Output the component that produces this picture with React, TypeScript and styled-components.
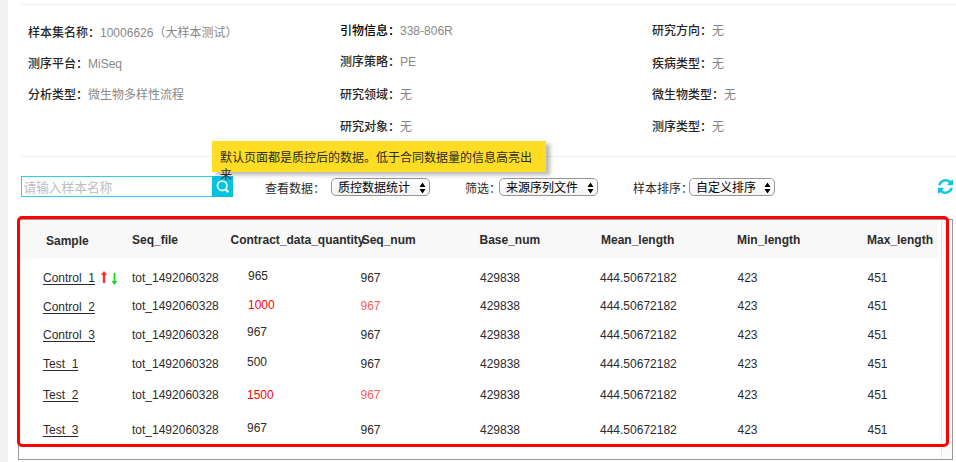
import React from "react";
import styled, { createGlobalStyle } from "styled-components";

const GlobalStyle = createGlobalStyle`
  * { box-sizing: border-box; }
  body {
    margin: 0;
    background: #fff;
    color: #2b2b2b;
    font: 12px/20px "Liberation Sans", "Noto Sans CJK SC", sans-serif;
  }
`;

const Page = styled.main`
  position: relative;
  display: flex;
  flex-direction: column;
  width: 956px;
  height: 462px;
  overflow: hidden;
  padding-left: 10px;
  border-left: 8px solid #f1f1f1;
`;

const InfoPanel = styled.section`
  display: grid;
  grid-template-columns: 312px 312px 1fr;
  height: 153px;
  margin: 4px 0 0 3px;
  padding: 1px 0 0 7px;
  border: solid #efefef;
  border-width: 1px 0;
`;

const InfoColumn = styled.dl<{ $top: number }>`
  margin: 0;
  padding-top: ${(p) => p.$top}px;
`;

const InfoItem = styled.div<{ $height: number }>`
  display: flex;
  height: ${(p) => p.$height}px;
  white-space: nowrap;
`;

const InfoLabel = styled.dt<{ $strong?: boolean }>`
  font-weight: 500;
  color: ${(p) => (p.$strong ? "#000" : "#262626")};
`;

const InfoValue = styled.dd`
  margin: 0;
  color: #888;
`;

const Toolbar = styled.section`
  display: flex;
  align-items: flex-start;
  height: 62px;
  padding: 19px 0 0 3px;
`;

const SearchBox = styled.form`
  display: flex;
  width: 212px;
  height: 21px;
  margin-right: 32px;
`;

const SearchInput = styled.input`
  width: 191px;
  height: 21px;
  padding: 3px 1.5px 0;
  border: 1px solid #2ccfe6;
  border-right: 0;
  outline: 0;
  background: #fff;
  font: 12.7px "Liberation Sans", "Noto Sans CJK SC", sans-serif;
  &::placeholder { color: #bdbdbd; opacity: 1; }
`;

const SearchButton = styled.button`
  display: flex;
  width: 21px;
  height: 21px;
  padding: 4px 0 0 4px;
  border: 0;
  background: #00c3e0;
`;

const FilterLabel = styled.span<{ $width: number }>`
  flex: none;
  width: ${(p) => p.$width}px;
  padding-top: 3px;
  white-space: nowrap;
`;

const Select = styled.button<{ $width: number; $gap: number }>`
  display: flex;
  flex: none;
  align-items: center;
  justify-content: space-between;
  width: ${(p) => p.$width}px;
  height: 18px;
  margin: 2px ${(p) => p.$gap}px 0 0;
  padding: 1px 3px 0 6px;
  border: 1px solid #969696;
  border-radius: 5px;
  background: linear-gradient(#fff, #f4f4f4);
  color: #000;
  font: 12px/16px "Liberation Sans", "Noto Sans CJK SC", sans-serif;
`;

const Refresh = styled.svg`
  flex: none;
  width: 15px;
  height: 15px;
  margin: 3px 3px 0 auto;
  fill: #10c6e2;
`;

const TableFrame = styled.section`
  display: grid;
  grid-template-columns: 1fr 11px;
  width: 935px;
  height: 241px;
  border: 1px solid #999;
`;

const ScrollTrack = styled.div`
  border-left: 1px solid #e6e6e6;
  background: #fafafa;
`;

const Table = styled.div`
  min-width: 0;
`;

const HeaderRow = styled.div`
  display: grid;
  grid-template-columns: 86px 98.5px 131.2px 117.8px 121.5px 136px 130px 1fr;
  height: 39px;
  margin: 0 3px 5px 0;
  padding: 10px 0 0 27px;
  background: #f8f8f8;
  font-weight: 700;
  white-space: nowrap;
`;

const HeaderCell = styled.span<{ $drop?: boolean }>`
  padding-top: ${(p) => (p.$drop ? 1 : 0)}px;
`;

const Row = styled.div<{ $height: number }>`
  display: grid;
  grid-template-columns: 89px 115px 113.5px 119.5px 120px 137.5px 130px 1fr;
  align-items: center;
  height: ${(p) => p.$height}px;
  padding-left: 24px;
  white-space: nowrap;
`;

const SampleCell = styled.span<{ $drop?: boolean }>`
  display: flex;
  align-items: center;
  padding-top: ${(p) => (p.$drop ? 2 : 0)}px;
`;

const SampleLink = styled.a`
  text-decoration: underline;
  text-underline-offset: 2px;
  text-decoration-skip-ink: none;
`;

const SortArrows = styled.svg`
  width: 18px;
  height: 16px;
  margin-left: 5px;
`;

const Quantity = styled.span<{ $indent: number; $raise: number; $low?: boolean }>`
  padding-left: ${(p) => p.$indent}px;
  padding-bottom: ${(p) => p.$raise * 2}px;
  color: ${(p) => (p.$low ? "#f00" : "inherit")};
`;

const Count = styled.span<{ $low?: boolean }>`
  color: ${(p) => (p.$low ? "#ff5c5c" : "inherit")};
`;

const Tooltip = styled.aside`
  position: absolute;
  left: 204px;
  top: 141px;
  width: 334px;
  height: 31px;
  padding: 9px 10px 0 8px;
  background: #ffdd24;
  box-shadow: 4px 3px 4px rgba(0, 0, 0, 0.28);
  line-height: 17px;
`;

const Highlight = styled.div`
  position: absolute;
  left: 9px;
  top: 216px;
  width: 932px;
  height: 231px;
  border: 3px solid #f00;
  border-radius: 5px;
  pointer-events: none;
`;

type Info = { label: string; value: string; height: number; strong?: boolean };

const infoColumns: { top: number; items: Info[] }[] = [
  {
    top: 17,
    items: [
      { label: "样本集名称：", value: "10006626（大样本测试）", height: 31 },
      { label: "测序平台：", value: "MiSeq", height: 31 },
      { label: "分析类型：", value: "微生物多样性流程", height: 31 },
    ],
  },
  {
    top: 15,
    items: [
      { label: "引物信息：", value: "338-806R", height: 31, strong: true },
      { label: "测序策略：", value: "PE", height: 33 },
      { label: "研究领域：", value: "无", height: 32 },
      { label: "研究对象：", value: "无", height: 32 },
    ],
  },
  {
    top: 15,
    items: [
      { label: "研究方向：", value: "无", height: 33 },
      { label: "疾病类型：", value: "无", height: 31 },
      { label: "微生物类型：", value: "无", height: 32 },
      { label: "测序类型：", value: "无", height: 32 },
    ],
  },
];

const headers = [
  "Sample", "Seq_file", "Contract_data_quantity", "Seq_num",
  "Base_num", "Mean_length", "Min_length", "Max_length",
];

const rows = [
  { sample: "Control_1", quantity: "965", indent: 1, raise: 2, height: 28 },
  { sample: "Control_2", quantity: "1000", indent: 1, raise: 1, height: 28, low: true, drop: true },
  { sample: "Control_3", quantity: "967", indent: 0, raise: 3, height: 30 },
  { sample: "Test_1", quantity: "500", indent: 0, raise: 2, height: 28 },
  { sample: "Test_2", quantity: "1500", indent: 0, raise: 0, height: 34, low: true },
  { sample: "Test_3", quantity: "967", indent: 0, raise: 2, height: 36 },
];

function DropDown({ text, width, gap }: { text: string; width: number; gap: number }) {
  return (
    <Select type="button" $width={width} $gap={gap}>
      {text}
      <svg width="7" height="12" viewBox="0 0 7 12">
        <path d="M3.5 0.5 6.5 5h-6zM3.5 11.5 6.5 7h-6z" fill="#000" />
      </svg>
    </Select>
  );
}

export default function App() {
  return (
    <Page>
      <GlobalStyle />
      <InfoPanel>
        {infoColumns.map((column, i) => (
          <InfoColumn key={i} $top={column.top}>
            {column.items.map((item) => (
              <InfoItem key={item.label} $height={item.height}>
                <InfoLabel $strong={item.strong}>{item.label}</InfoLabel>
                <InfoValue>{item.value}</InfoValue>
              </InfoItem>
            ))}
          </InfoColumn>
        ))}
      </InfoPanel>

      <Toolbar>
        <SearchBox>
          <SearchInput placeholder="请输入样本名称" />
          <SearchButton type="button" aria-label="搜索">
            <svg width="14" height="14" viewBox="0 0 14 14" fill="none" stroke="#e6fbff" strokeWidth="1.8">
              <circle cx="6.2" cy="5.8" r="4.7" />
              <path d="m9.6 9.3 2.8 2.9" strokeWidth="2.4" />
            </svg>
          </SearchButton>
        </SearchBox>
        <FilterLabel $width={66}>查看数据：</FilterLabel>
        <DropDown text="质控数据统计" width={99} gap={35} />
        <FilterLabel $width={34}>筛选：</FilterLabel>
        <DropDown text="来源序列文件" width={99} gap={35} />
        <FilterLabel $width={56}>样本排序：</FilterLabel>
        <DropDown text="自定义排序" width={86} gap={0} />
        <Refresh viewBox="0 128 1536 1536">
          <path d="M1511 1056q0 5-1 7-64 268-268 434.5t-478 166.5q-146 0-282.5-55t-243.5-157l-129 129q-19 19-45 19t-45-19-19-45v-448q0-26 19-45t45-19h448q26 0 45 19t19 45-19 45l-137 137q71 66 161 102t187 36q134 0 250-65t186-179q11-17 53-117 8-23 30-23h192q13 0 22.5 9.5t9.5 22.5zm25-800v448q0 26-19 45t-45 19h-448q-26 0-45-19t-19-45 19-45l138-138q-148-137-349-137-134 0-250 65t-186 179q-11 17-53 117-8 23-30 23h-199q-13 0-22.5-9.5t-9.5-22.5v-7q65-268 270-434.5t480-166.5q146 0 284 55.5t245 156.5l130-129q19-19 45-19t45 19 19 45z" />
        </Refresh>
      </Toolbar>

      <TableFrame>
        <Table>
          <HeaderRow>
            {headers.map((name, i) => (
              <HeaderCell key={name} $drop={i === 0}>{name}</HeaderCell>
            ))}
          </HeaderRow>
          {rows.map((row, i) => (
            <Row key={row.sample} $height={row.height}>
              <SampleCell $drop={row.drop}>
                <SampleLink>{row.sample}</SampleLink>
                {i === 0 && (
                  <SortArrows viewBox="0 0 18 16" fill="none">
                    <path d="M4 13V4" stroke="#ff2a2a" strokeWidth="2.4" />
                    <path d="M4 1 7 5H1z" fill="#ff2a2a" />
                    <path d="M14.5 3v9" stroke="#16d816" strokeWidth="1.8" />
                    <path d="m14.5 15-2.8-4h5.6z" fill="#16d816" />
                  </SortArrows>
                )}
              </SampleCell>
              <span>tot_1492060328</span>
              <Quantity $indent={row.indent} $raise={row.raise} $low={row.low}>{row.quantity}</Quantity>
              <Count $low={row.low}>967</Count>
              <span>429838</span>
              <span>444.50672182</span>
              <span>423</span>
              <span>451</span>
            </Row>
          ))}
        </Table>
        <ScrollTrack />
      </TableFrame>

      <Tooltip>默认页面都是质控后的数据。低于合同数据量的信息高亮出来</Tooltip>
      <Highlight />
    </Page>
  );
}
